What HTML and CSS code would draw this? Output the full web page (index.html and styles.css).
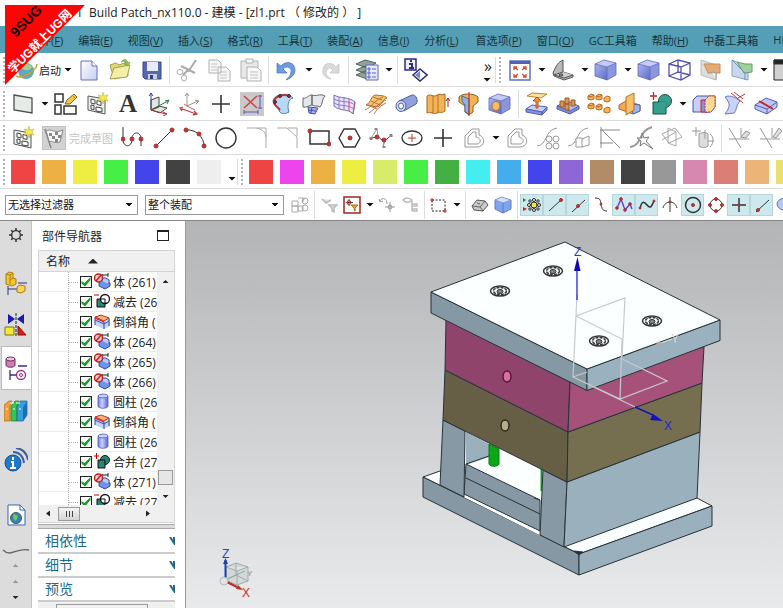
FILE: index.html
```
<!DOCTYPE html>
<html lang="zh-CN">
<head>
  <meta charset="UTF-8">
  <meta name="viewport" content="width=device-width, initial-scale=1.0">
  <title>Build Patch_nx110.0 - 建模</title>
  <link rel="stylesheet" href="styles.css">
</head>
<body>
  <!-- shared icons -->
  <svg class="defs" width="0" height="0" aria-hidden="true">
    <defs>
      <linearGradient id="sky" x1="0" y1="0" x2="0" y2="1"><stop offset="0" stop-color="#b3b4b6"/><stop offset="1" stop-color="#e8eaec"/></linearGradient>
      <linearGradient id="blue" x1="0" y1="0" x2="1" y2="1"><stop offset="0" stop-color="#aab4f0"/><stop offset="1" stop-color="#5f6dc4"/></linearGradient>
      <linearGradient id="pale" x1="0" y1="0" x2="1" y2="1"><stop offset="0" stop-color="#fff"/><stop offset="1" stop-color="#c6cdf2"/></linearGradient>
      <linearGradient id="cylfill" x1="0" y1="0" x2="1" y2="0"><stop offset="0" stop-color="#6a7be8"/><stop offset=".4" stop-color="#ccd4ff"/><stop offset="1" stop-color="#5566d8"/></linearGradient>
    </defs>
    <symbol id="i-sketch" viewBox="0 0 24 24"><path d="M3 4l17 3v15L3 18z" fill="#eef2ec" stroke="#555"/><path d="M6 7l4 1v4l-4-1zM12 8.500l4 1v4l-4-1zM6 13l3 .5v4L6 17zM11 15l6 1v4l-6-1z" fill="#fff" stroke="#444"/><path d="M18 0l1 4 4-1-2 3 2 3-4-1-1 4-1-4-4 1 2-3-2-3 4 1z" fill="#f6e94e" stroke="#b8a52c" stroke-width=".5"/></symbol>
    <symbol id="i-cube" viewBox="0 0 24 24"><g stroke="none"><path d="M1 6l9-4 12 3-9 4z" fill="#c3cbf8"/><path d="M1 6l12 3v13L1 18z" fill="url(#blue)"/><path d="M13 9l9-4v12l-9 5z" fill="#8a96de"/></g><path d="M1 6l9-4 12 3v12l-9 5L1 18zM1 6l12 3 9-4M13 9v13" stroke="#5f69b8" fill="none" stroke-width=".8"/></symbol>
    <symbol id="i-body" viewBox="0 0 17 17"><path d="M5 9l4-2 7 3v3l-5 3-6-3z" fill="#6f92ec" stroke="#2b46b0"/><path d="M8 8V5h4l3 2v4" fill="#bccbfa" stroke="#2b46b0"/><path d="M8 1v4M14 0v4M8 2h6" stroke="#222"/><circle cx="4.500" cy="5" r="4" fill="#f7d0d0" stroke="#c81e1e" stroke-width="1.500"/><path d="M2 8l5-6" stroke="#c81e1e" stroke-width="1.500"/></symbol>
    <symbol id="i-minus" viewBox="0 0 17 17"><path d="M0 2h5" stroke="#c00"/><path d="M3 6h8v8H3z" fill="#2b8577" stroke="#111"/><circle cx="11" cy="6" r="4.500" fill="#fff" stroke="#111" stroke-width="1.300"/><path d="M7 6h4v4" stroke="#111"/></symbol>
    <symbol id="i-chamfer" viewBox="0 0 17 17"><path d="M1 5v7l9 4 6-3V6l-4-3z" fill="#c3d2fa" stroke="none"/><path d="M1 4v8M10 9v7M15 5v8" stroke="#35488f"/><path d="M1 4l6-2 8 3-5 3z" fill="#f6b27a" stroke="#b83a20"/><path d="M1 7l9 4 5-3" stroke="#3c50b0"/><path d="M1 5l9 4" stroke="#d32020" stroke-width="1.300"/></symbol>
    <symbol id="i-cyl" viewBox="0 0 17 17"><path d="M4 3v10c0 3 10 3 10 0V3z" fill="url(#cylfill)" stroke="#4a58c0" stroke-width=".8"/><ellipse cx="9" cy="3" rx="5" ry="2" fill="#c7cffc" stroke="#4a58c0" stroke-width=".8"/></symbol>
    <symbol id="i-unite" viewBox="0 0 17 17"><path d="M0 3h5M2.500 0v6" stroke="#c00"/><circle cx="11" cy="7" r="4.500" fill="#2b8577" stroke="#111"/><path d="M4 7h7v8H4z" fill="#2b8577" stroke="#111"/></symbol>
    <symbol id="i-trim" viewBox="0 0 24 24"><path d="M1 2l12 20M13 2v10M1 13h20" stroke="#999" fill="none"/></symbol>
  </svg>

  <div class="app">
    <header class="titlebar">1&nbsp; Build Patch_nx110.0 - 建模 - [zl1.prt （ 修改的 ） ]</header>

    <nav class="menubar">
      <button>文件(<u>F</u>)</button>
      <button>编辑(<u>E</u>)</button>
      <button>视图(<u>V</u>)</button>
      <button>插入(<u>S</u>)</button>
      <button>格式(<u>R</u>)</button>
      <button>工具(<u>T</u>)</button>
      <button>装配(<u>A</u>)</button>
      <button>信息(<u>I</u>)</button>
      <button>分析(<u>L</u>)</button>
      <button class="wide">首选项(<u>P</u>)</button>
      <button>窗口(<u>O</u>)</button>
      <button>GC工具箱</button>
      <button>帮助(<u>H</u>)</button>
      <button>中磊工具箱</button>
      <button>HB</button>
    </nav>

    <!-- standard toolbar -->
    <div class="toolbar">
      <span class="grip"></span>
      <button class="start">
        <svg viewBox="0 0 24 24" width="24" height="24"><circle cx="11" cy="13" r="8" fill="#5fa9c8"/><path d="M5 8c4-4 9-3 12 1-3 5-8 4-12-1z" fill="#a8d28a"/><path d="M1 18c5 5 22-5 21-12-1 6-14 14-21 12z" fill="#f1c232" stroke="#a98212" stroke-width=".6"/></svg>
        启动<i class="arrow"></i>
      </button>
      <button class="tool" aria-label="新建"><svg viewBox="0 0 24 24"><path d="M4 3h11l5 5v14H4z" fill="url(#pale)" stroke="#6a70b8"/><path d="M15 3v5h5" fill="#fff" stroke="#6a70b8"/></svg></button>
      <button class="tool" aria-label="打开"><svg viewBox="0 0 24 24"><path d="M2 7l6-2 3 2 8-3 1 14-14 3z" fill="#e0d878" stroke="#a5a052"/><path d="M2 21l4-11 16-3-3 12z" fill="#f3efa6" stroke="#a5a052"/><path d="M13 4c3-4 6-3 7 1l2-1-2 4-4-2 2-1c-1-2-3-2-5-1z" fill="#8cc152" stroke="#6c9c3c" stroke-width=".6"/></svg></button>
      <button class="tool" aria-label="保存"><svg viewBox="0 0 24 24"><path d="M4 4h18v17H6l-2-2z" fill="#5769ad" stroke="#3b4a86"/><path d="M8 4h11v9H8z" fill="#e7ecf7" stroke="none"/><path d="M9 16h9v5H9z" fill="#c9cfdc" stroke="none"/><path d="M11 17h3v4h-3z" fill="#333f70" stroke="none"/></svg></button>
      <span class="sep"></span>
      <button class="tool" aria-label="剪切"><svg viewBox="0 0 24 24" stroke="#aaa"><path d="M20 2l-8 12M5 8l14 7M12 12l-5 5" stroke-width="2"/><ellipse cx="4" cy="14" rx="3" ry="2.500"/><ellipse cx="8" cy="20" rx="2.500" ry="3"/></svg></button>
      <button class="tool" aria-label="复制"><svg viewBox="0 0 24 24"><path d="M2 2h9l3 3v10H2zM11 9h8l4 4v10H11z" fill="#f7f7f7" stroke="#b0b0b0"/><path d="M4 6h6M4 9h6M4 12h6M13 14h7M13 17h7M13 20h7" stroke="#c4c4c4"/></svg></button>
      <button class="tool" aria-label="粘贴"><svg viewBox="0 0 24 24"><path d="M3 3h17v17H3z" fill="#e9e9e9" stroke="#b0b0b0"/><path d="M8 1h7v4H8zM9 9h10l4 4v10H9z" fill="#f8f8f8" stroke="#b0b0b0"/><path d="M12 14h8M12 17h8M12 20h8" stroke="#c0c0c0"/></svg></button>
      <span class="sep"></span>
      <button class="tool" aria-label="撤消"><svg viewBox="0 0 24 24"><path d="M2 5v10h10l-4-4c4-4 9-1 8 3 0 3-2 5-5 8 6-2 9-6 9-10 0-8-9-10-14-4z" fill="#6f9be0" stroke="#4272bf" stroke-width=".7"/></svg></button>
      <i class="arrow"></i>
      <button class="tool" aria-label="重做"><svg viewBox="0 0 24 24"><path d="M21 6v9h-9l3-3c-3-4-7-1-7 2 0 3 2 5 5 7-6-1-9-5-8-9 0-7 8-9 13-3z" fill="#dadada" stroke="#c2c2c2" stroke-width=".7"/></svg></button>
      <span class="sep"></span>
      <button class="tool" aria-label="图层"><svg viewBox="0 0 24 24"><path d="M1 17l9-4 11 3-9 5zM1 12l9-4 11 3-9 5zM1 6l9-4 11 3-9 5z" fill="#8fa59a" stroke="#4c6258"/><path d="M11 7h12v15H11z" fill="#e6eafc" stroke="#5a66b8"/><path d="M13 10h2v2h-2zM13 14h2v2h-2zM13 18h2v2h-2zM17 11h4M17 15h4M17 19h4" stroke="#5a66b8"/></svg></button>
      <i class="arrow"></i>
      <span class="sep"></span>
      <button class="tool" aria-label="信息"><svg viewBox="0 0 24 24"><path d="M1 1h11v11H1z" fill="#eef" stroke="#2c2c7c" stroke-width="1.500"/><path d="M6 3h2M5 6h3v4M5 10h5" stroke="#2c2c7c" stroke-width="2"/><path d="M9 17l7-6 7 6-7 6z" fill="#fff" stroke="#2c2c7c" stroke-width="1.500"/><path d="M11 17l5-4v8z" fill="#7d84cc" stroke="none"/></svg></button>
      <div class="more"><span>»</span><i class="arrow"></i></div>
      <span class="grip split"></span>
      <button class="tool" aria-label="适合窗口"><svg viewBox="0 0 24 24"><path d="M2 3h20v19H2z" fill="#fff" stroke="#5f73c0" stroke-width="1.500"/><path d="M2 3h20v3H2z" fill="#4f63b4" stroke="none"/><path d="M6 9l4 3M18 9l-4 3M6 19l4-3M18 19l-4-3M6 12V9h3M18 12V9h-3M6 16v3h3M18 16v3h-3" stroke="#d9482b" stroke-width="1.300"/></svg></button>
      <i class="arrow"></i>
      <button class="tool" aria-label="方位"><svg viewBox="0 0 24 24"><path d="M2 15c3-7 5-11 10-13v12l10 3v2l-9 3-10-4z" fill="#b8b8bc" stroke="#555"/><path d="M12 14l-9 3 10 3 9-3" fill="#d0d0d2" stroke="#555"/><ellipse cx="10" cy="17" rx="2" ry="1" /></svg></button>
      <i class="arrow"></i>
      <button class="tool" aria-label="着色"><svg><use href="#i-cube"/></svg></button>
      <i class="arrow"></i>
      <button class="tool" aria-label="带边着色"><svg><use href="#i-cube"/></svg></button>
      <button class="tool" aria-label="线框"><svg viewBox="0 0 24 24" stroke="#5451a8"><path d="M1 6l9-4 12 3v12l-9 5L1 18zM1 6l12 3 9-4M13 9v13M10 2v12L1 18M10 14l12 3" stroke-width="1.300"/></svg></button>
      <button class="tool" aria-label="剪切截面"><svg viewBox="0 0 24 24"><path d="M2 2l15 5v15L2 17z" fill="#ddd" stroke="#bbb"/><path d="M5 6h16v9H9z" fill="#e2aa75" stroke="#c98c54"/><path d="M13 14l4 1v7" fill="#f3f3f3" stroke="#999"/></svg></button>
      <button class="tool" aria-label="编辑截面"><svg viewBox="0 0 24 24"><path d="M2 2l16 7v13L2 18z" fill="#c7d7ec" stroke="#8ba2c0"/><path d="M7 4l8 2h7v8l-8 1z" fill="#9fd39b" stroke="#699c67"/><path d="M2 2l13 13M15 14v8" stroke="#7793b4"/></svg></button>
      <i class="arrow"></i>
      <button class="tool" aria-label="窗口"><svg viewBox="0 0 24 24"><path d="M1 2h22v20H1z" fill="#d0d0d0" stroke="#222"/><path d="M1 2h22v4H1z" fill="#222"/></svg></button>
    </div>

    <!-- feature toolbar -->
    <div class="toolbar">
      <span class="grip"></span>
      <button class="tool" aria-label="基准平面"><svg viewBox="0 0 24 24"><path d="M3 3l18 3v15L3 18z" fill="#e3ece6" stroke="#4a4f4c" stroke-width="1.300"/></svg></button>
      <i class="arrow"></i>
      <button class="tool" aria-label="草图曲线"><svg viewBox="0 0 24 24"><path d="M1 2h8v8H1zM1 13h6v9H1zM10 14h12v8H10z" fill="#fff" stroke="#333" stroke-width="1.500"/><path d="M11 12l2-4 7-6 3 3-7 7z" fill="#f2c84b" stroke="#8a5f1e"/><path d="M18 3l3 3" stroke="#d66"/></svg></button>
      <button class="tool" aria-label="草图"><svg><use href="#i-sketch"/></svg></button>
      <button class="tool" aria-label="文本"><svg viewBox="0 0 24 24"><text x="12" y="20" class="glyph-a" text-anchor="middle">A</text></svg></button>
      <button class="tool" aria-label="坐标系"><svg viewBox="0 0 24 24"><path d="M4 8l8-3v10l-8 3zM4 18l9 3 7-5-8-2z" fill="#dfe7df" stroke="#444"/><path d="M4 18V1M2 4l2-3 2 3" stroke="#3a3f9c"/><path d="M4 18l17-9M18 9l4-1-2 4" stroke="#2c7a4a"/><path d="M4 18l15 4M16 20l4 2-4 2" stroke="#b23030"/></svg></button>
      <button class="tool" aria-label="WCS"><svg viewBox="0 0 24 24"><path d="M9 2v12M7 4l2-3 2 3" stroke="#999"/><path d="M9 14l11-5M17 8l4 1-3 3" stroke="#8a9a8a"/><path d="M9 14l-3-2M9 14l8 4" stroke="#b66"/><path d="M2 16l16 6M5 15l-3 1 2 3M16 19l3 3-4 1" stroke="#c04040" stroke-width="1.300"/></svg></button>
      <button class="tool" aria-label="点"><svg viewBox="0 0 24 24"><path d="M12 3v18M3 12h18" stroke-width="1.600"/></svg></button>
      <button class="tool" aria-label="测量"><svg viewBox="0 0 24 24"><path d="M0 0h24v24H0z" fill="#c9c9c9" stroke="none"/><path d="M4 4l13 12M17 4L4 16" stroke="#c94343" stroke-width="1.500"/><path d="M4 20h14M20 3v14M4 18v4M18 18v4M18 4h4M18 16h4" stroke="#5a5ab4"/></svg></button>
      <button class="tool" aria-label="曲面"><svg viewBox="0 0 24 24"><path d="M2 8C5 2 16 0 22 6c-5 1-6 9-4 14-7 4-11 0-10-4-3-1-6-3-6-8z" fill="#b7d8f2" stroke="#5383ae"/><path d="M3 9C5 3 14 2 18 4M3 10c0 4 4 5 6 8" stroke="#b33" stroke-width="2"/><circle cx="9" cy="4" r="1.500" fill="#b22"/><circle cx="18" cy="4" r="1.500" fill="#b22"/><circle cx="4" cy="10" r="1.500" fill="#b22"/></svg></button>
      <button class="tool" aria-label="扫掠"><svg viewBox="0 0 24 24"><path d="M1 6c4 1 5-3 9-3v10c-3 0-5 3-9 2zM10 3c4 2 8-2 13 1-3 2-2 8-5 11-4-2-5 0-8-2z" fill="#e4e8ea" stroke="#666"/><path d="M6 15l10 1-3 6-6-1z" fill="#a8b3ee" stroke="#4251b0"/><path d="M6 18l8 1M10 15l-1 6" stroke="#4251b0"/></svg></button>
      <button class="tool" aria-label="网格曲面"><svg viewBox="0 0 24 24"><path d="M1 3c6 4 14 1 21 7l-2 12C15 16 8 20 1 14z" fill="#e6e3fb" stroke="#7a68bd"/><path d="M6 5v12M11 5v13M1 7c7 4 14 1 21 6M1 11c7 4 13 1 20 6" stroke="#8a7ac8"/><path d="M16 7v12M22 10l-2 12" stroke="#d0506c"/></svg></button>
      <button class="tool" aria-label="曲线网格"><svg viewBox="0 0 24 24"><path d="M2 13c6-3 4-9 10-10 5 1 8 0 11 3-5 1-4 7-10 9z" fill="#f6c66e" stroke="#c0621e"/><path d="M1 18c7-3 8-9 18-13M5 21c6-4 8-9 17-13M10 22c4-6 6-8 12-11M7 9l9 4M4 13l9 4M9 5l9 3" stroke="#c0704c"/></svg></button>
      <button class="tool" aria-label="管道"><svg viewBox="0 0 24 24"><path d="M4 9l13-6c4-1 7 6 4 9L9 19z" fill="#90a0dc" stroke="#5060a0"/><ellipse cx="6" cy="14" rx="5" ry="5.500" fill="#d2daf6" stroke="#5060a0"/><ellipse cx="6" cy="14" rx="2.500" ry="3" fill="#fff" stroke="#5060a0"/></svg></button>
      <button class="tool" aria-label="拉伸"><svg viewBox="0 0 24 24"><path d="M1 4c4-3 6 2 10-1 3-2 4 1 8-1v17c-4 3-5 0-8 2-4 2-6-2-10 0z" fill="#f1b459" stroke="#a9651b"/><path d="M7 4v17M12 3v18" stroke="#b87326"/><path d="M22 15V7M20 9l2-3 2 3" stroke="#a22"/></svg></button>
      <button class="tool" aria-label="旋转"><svg viewBox="0 0 24 24"><path d="M2 5c3-4 15-4 19 0v5l-5 4v6l-4 3-4-3v-6L2 10z" fill="#f2b24f" stroke="#8d5a22"/><path d="M12 7v15l-4-2v-7L5 9V4z" fill="#8fb4df" stroke="#4a6f9e"/><path d="M12 0v24" stroke="#c22"/></svg></button>
      <button class="tool" aria-label="孔"><svg viewBox="0 0 24 24"><use href="#i-cube"/><ellipse cx="8" cy="14" rx="4" ry="4.500" fill="#f2bf6b" stroke="#b96a28"/></svg></button>
      <span class="sep"></span>
      <button class="tool" aria-label="偏置"><svg viewBox="0 0 24 24"><path d="M1 17l6-4 15 2-5 5z" fill="#c6cffa" stroke="#5060b0"/><path d="M1 17l16 3v3L1 20zM17 20l5-5v3l-5 5z" fill="#8695e0" stroke="#5060b0"/><path d="M2 4l5-3 15 1-6 4z" fill="#f6e2a0" stroke="#b08a34"/><path d="M11 16V9H8l4-4 4 4h-3v7z" fill="#f1924e" stroke="#b85416"/></svg></button>
      <button class="tool" aria-label="圆柱阵列"><svg viewBox="0 0 24 24"><path d="M1 14l10-5 12 5-9 7z" fill="#b6c1f2" stroke="#5060b0"/><path d="M1 14l13 5 9-5v3l-9 5-13-5z" fill="#7f8edc" stroke="#5060b0"/><path d="M4 9h4v6H4zM9 6h4v6H9zM9 12h4v6H9zM15 8h4v6h-4z" fill="#dd9450" stroke="#9d5a20"/></svg></button>
      <button class="tool" aria-label="阵列特征"><svg viewBox="0 0 24 24" stroke="#b96a20"><path d="M1 4l3-2 3 1v4L4 8 1 7zM9 4l3-2 3 1v4l-3 1-3-1zM17 6l3-2 3 1v4l-3 1-3-1zM1 13l3-2 3 1v4l-3 1-3-1zM9 14l3-2 3 1v4l-3 1-3-1zM17 17l3-2 3 1v4l-3 1-3-1z" fill="#f6b259"/><path d="M1 4l3 1 3-2M9 4l3 1 3-2M1 13l3 1 3-2M9 14l3 1 3-2"/></svg></button>
      <button class="tool" aria-label="修剪体"><svg viewBox="0 0 24 24"><path d="M1 13l7-4 14 4v6l-7 3-14-5z" fill="#f2a95c" stroke="#b06a25"/><path d="M13 12l9 1v6l-7 3z" fill="#9eb4ee" stroke="#5265b0"/><path d="M8 5l8-4v17l-8 5z" fill="#f7bf66" stroke="#b07722"/></svg></button>
      <button class="tool" aria-label="合并"><svg viewBox="0 0 24 24"><path d="M1 4h7M4.500 0v8" stroke="#c22" stroke-width="1.300"/><circle cx="16" cy="9" r="6.500" fill="#36a08e" stroke="#1d4f48"/><path d="M4 10h13v12H4z" fill="#36a08e" stroke="#1d4f48"/><path d="M10 10.500h6.500V15" stroke="#36a08e" stroke-width="2"/></svg></button>
      <i class="arrow"></i>
      <button class="tool" aria-label="抽壳"><svg viewBox="0 0 24 24"><path d="M1 8l4-4h18v11l-4 5H1z" fill="#c8cff6" stroke="#4957a8"/><path d="M9 8h7v12H9z" fill="#8292e0" stroke="#c22"/><path d="M13 8l4-4h6v11l-4 5h-6z" fill="#f9d898" stroke="#b3372a" stroke-dasharray="2 1"/></svg></button>
      <button class="tool" aria-label="修剪片体"><svg viewBox="0 0 24 24"><path d="M2 5c6-3 12 2 15 4-4 4-3 9-6 12l-9 1c5-7 6-10 0-17z" fill="#c9d3f8" stroke="#6976b8"/><path d="M8 1l12 10M11 0l9 7M15 6l7-4" stroke="#c33"/></svg></button>
      <button class="tool" aria-label="拆分体"><svg viewBox="0 0 24 24"><path d="M1 13l11-7 11 4v5l-10 7-12-5z" fill="#bac5f7" stroke="#5361b4"/><path d="M1 13l12 4 10-7M13 17v5" stroke="#5361b4"/><path d="M5 9l14 8" stroke="#c22" stroke-width="2"/></svg></button>
    </div>

    <!-- sketch curves -->
    <div class="toolbar">
      <span class="grip"></span>
      <button class="tool" aria-label="任务环境草图"><svg><use href="#i-sketch"/></svg></button>
      <button class="tool" aria-label="完成草图" disabled><svg viewBox="0 0 24 24"><path d="M0 0h24v24H0z" fill="#d2d2d2" stroke="#b4b4b4"/><path d="M4 5c5-3 9 3 17-1l-3 12c-5 2-8-2-11 0z" fill="#f8f8f8" stroke="#888"/><path d="M3 3l6 19" stroke="#888" stroke-width="1.500"/><path d="M7 7h3v3H7zM13 6h3v3h-3zM10 10h3v3h-3zM16 9h3v3h-3zM13 13h3v3h-3z" fill="#888" stroke="none"/></svg></button>
      <span class="hint">完成草图</span>
      <button class="tool" aria-label="轮廓"><svg viewBox="0 0 24 24"><path d="M2 1v12c0 9 9 9 9 0 0-8 9-8 9 0v7"/><g class="dot"><circle cx="2" cy="13" r="2"/><circle cx="11" cy="13" r="2"/><circle cx="20" cy="13" r="2"/></g></svg></button>
      <button class="tool" aria-label="直线"><svg viewBox="0 0 24 24"><path d="M4 20L20 4"/><g class="dot"><circle cx="4" cy="20" r="2"/><circle cx="20" cy="4" r="2"/></g></svg></button>
      <button class="tool" aria-label="圆弧"><svg viewBox="0 0 24 24"><path d="M3 4c10-1 18 7 18 16"/><g class="dot"><circle cx="3" cy="4" r="2"/><circle cx="16" cy="8" r="2"/><circle cx="21" cy="20" r="2"/></g></svg></button>
      <button class="tool" aria-label="圆"><svg viewBox="0 0 24 24"><circle cx="12" cy="12" r="10" stroke-width="1.400"/></svg></button>
      <button class="tool" aria-label="圆角"><svg viewBox="0 0 24 24" stroke="#aaa"><path d="M2 2h9c8 1 10 6 10 10v10M12 2h9v9" /></svg></button>
      <button class="tool" aria-label="倒斜角"><svg viewBox="0 0 24 24" stroke="#aaa"><path d="M1 2h10l10 9v11M12 2h9v8"/></svg></button>
      <button class="tool" aria-label="矩形"><svg viewBox="0 0 24 24"><path d="M3 5h19v13H3z" stroke-width="1.500"/><g class="dot"><circle cx="3" cy="5" r="2"/><circle cx="22" cy="18" r="2"/></g></svg></button>
      <button class="tool" aria-label="多边形"><svg viewBox="0 0 24 24"><path d="M1 12L6 3h11l5 9-5 9H6z" stroke-width="1.400"/><g class="dot"><circle cx="12" cy="12" r="2"/></g></svg></button>
      <button class="tool" aria-label="艺术样条"><svg viewBox="0 0 24 24"><path d="M2 12c4 0 5-2 7-1s4 4 7 3 4-3 6-5"/><path d="M2 12l6-9 1 8M16 15l-2 6 1-6" stroke="#999"/><g class="dot"><circle cx="8" cy="11" r="2"/><circle cx="15" cy="14" r="2"/></g><path d="M7 2v2M2 11v3M22 8v3M15 20v2" stroke="#888" stroke-width="3"/></svg></button>
      <button class="tool" aria-label="椭圆"><svg viewBox="0 0 24 24"><ellipse cx="12" cy="12" rx="10" ry="7" stroke-width="1.400"/><path d="M12 8v8M8 12h8" stroke="#c33"/></svg></button>
      <button class="tool" aria-label="草图点"><svg viewBox="0 0 24 24"><path d="M12 3v18M3 12h18" stroke-width="1.600"/></svg></button>
      <button class="tool" aria-label="偏置曲线"><svg viewBox="0 0 24 24" stroke="#999"><path d="M3 21V10l7-7h7v6c7 2 6 12-2 12zM6 18v-7l5-5h3v5c6 1 5 7 1 7z"/></svg></button>
      <i class="arrow"></i>
      <button class="tool" aria-label="偏置"><svg viewBox="0 0 24 24" stroke="#999"><path d="M3 21V10l7-7h7v6c7 2 6 12-2 12zM6 18v-7l5-5h3v5c6 1 5 7 1 7z"/></svg></button>
      <button class="tool" aria-label="阵列曲线"><svg viewBox="0 0 24 24" stroke="#999"><path d="M1 20c11-1 7-16 20-18"/><g fill="#fff"><circle cx="13" cy="13" r="3"/><circle cx="20" cy="13" r="3"/><circle cx="13" cy="20" r="3"/><circle cx="20" cy="20" r="3"/></g></svg></button>
      <button class="tool" aria-label="镜像曲线"><svg viewBox="0 0 24 24" stroke="#999"><path d="M1 20c11-1 7-16 20-18"/><path d="M9 12h6v9H9zM15 13l7-3v9l-7 2" fill="#fff"/></svg></button>
      <button class="tool" aria-label="相交曲线"><svg viewBox="0 0 24 24" stroke="#888"><path d="M3 1v21M2 4h20M4 4l18 18M2 17h13"/></svg></button>
      <button class="tool" aria-label="投影曲线"><svg viewBox="0 0 24 24" stroke="#999"><path d="M1 21c13-2 8-16 22-20" stroke-width="2"/><path d="M13 7l2 5 5-1-3 4 7 8-9-6-4 3 1-5-4-3h5z" fill="#fff" stroke="#777"/></svg></button>
      <button class="tool" aria-label="派生曲线"><svg viewBox="0 0 24 24" stroke="#aaa"><path d="M2 8l13-6 7 9-13 6zM8 2l8 4v14l-8-3zM2 14l14-8"/></svg></button>
      <button class="tool" aria-label="投影"><svg viewBox="0 0 24 24"><path d="M8 8c3-2 7-2 9 0v12c-2 2-7 2-9 0z" fill="#ddd" stroke="#999"/><path d="M5 1v9M1 5h9M14 4v9M19 8c4 3 4 9 0 13M17 15h6" stroke="#999"/></svg></button>
      <span class="sep"></span>
      <button class="tool" aria-label="快速修剪"><svg viewBox="0 0 24 24"><use href="#i-trim"/><path d="M13 11l5-6 4 2-4 5z" fill="#ddd" stroke="#999"/></svg></button>
      <button class="tool" aria-label="快速延伸"><svg viewBox="0 0 24 24"><use href="#i-trim"/><path d="M14 11l6-9 3 3-6 7z" fill="#ddd" stroke="#999"/></svg></button>
    </div>

    <!-- colour palettes -->
    <div class="toolbar">
      <span class="grip pal"></span>
      <button class="swatch c-red" aria-label="红"></button>
      <button class="swatch c-orange" aria-label="橙"></button>
      <button class="swatch c-yellow" aria-label="黄"></button>
      <button class="swatch c-green" aria-label="绿"></button>
      <button class="swatch c-blue" aria-label="蓝"></button>
      <button class="swatch c-black" aria-label="黑"></button>
      <button class="swatch c-white" aria-label="白"></button>
      <i class="arrow low"></i>
      <span class="grip pal split"></span>
      <button class="swatch c-red" aria-label="红"></button>
      <button class="swatch c-magenta" aria-label="洋红"></button>
      <button class="swatch c-orange" aria-label="橙"></button>
      <button class="swatch c-yellow" aria-label="黄"></button>
      <button class="swatch c-lime" aria-label="黄绿"></button>
      <button class="swatch c-green" aria-label="绿"></button>
      <button class="swatch c-forest" aria-label="深绿"></button>
      <button class="swatch c-cyan" aria-label="青"></button>
      <button class="swatch c-sky" aria-label="天蓝"></button>
      <button class="swatch c-blue" aria-label="蓝"></button>
      <button class="swatch c-purple" aria-label="紫"></button>
      <button class="swatch c-brown" aria-label="棕"></button>
      <button class="swatch c-black" aria-label="黑"></button>
      <button class="swatch c-gray" aria-label="灰"></button>
      <button class="swatch c-pink" aria-label="粉"></button>
      <button class="swatch c-salmon" aria-label="浅红"></button>
      <button class="swatch c-peach" aria-label="浅橙"></button>
      <button class="swatch c-cream" aria-label="浅黄"></button>
    </div>

    <!-- selection bar -->
    <div class="toolbar select-bar">
      <select class="filter" aria-label="选择过滤器"><option>无选择过滤器</option></select>
      <select class="scope" aria-label="选择范围"><option>整个装配</option></select>
      <button class="snap" aria-label="装配"><svg viewBox="0 0 18 18" stroke="#aaa"><path d="M1 5h6v5H1zM1 10h6v6H1zM7 10h5v5H7zM7 2h5v4M11 6l3-4"/><circle cx="14" cy="5" r="3"/><circle cx="14" cy="12" r="3"/></svg></button>
      <span class="sep"></span>
      <button class="snap" aria-label="重置过滤器"><svg viewBox="0 0 18 18" stroke="#bbb"><path d="M2 3l4 4 5-3M9 9h8l-3 3v4l-2-1v-3z" fill="#ddd" stroke-width="1.500"/></svg></button>
      <button class="snap" aria-label="过滤"><svg viewBox="0 0 18 18"><path d="M1 1h16v16H1z" fill="#fff" stroke="#9c2525" stroke-width="1.500"/><path d="M6 3v7M3 6.500h7" stroke="#533"/><circle cx="6" cy="6.500" r="2" stroke="#a33"/><path d="M8 9h7l-3 3v3l-1-3z" fill="#f3a53a" stroke="#b26a14"/></svg></button>
      <i class="arrow"></i>
      <button class="snap" aria-label="取消选择"><svg viewBox="0 0 18 18" stroke="#999"><path d="M2 5c2-4 7-3 7 3M1 3l1 3 3-1M12 6v10M7 11h10"/><circle cx="12" cy="11" r="2"/></svg></button>
      <button class="snap" aria-label="查找"><svg viewBox="0 0 18 18" stroke="#bbb"><path d="M2 4c3-3 7-2 9 0-3 3-6 3-9 0zM11 5v10M11 8h5v2h-5M11 13h5v2h-5" stroke-width="1.500"/></svg></button>
      <span class="sep"></span>
      <button class="snap" aria-label="矩形选择"><svg viewBox="0 0 18 18"><path d="M2 4h13v11H2z" stroke="#222" stroke-dasharray="2 1.500"/><path d="M1 3h2v2H1zM14 14h2v2h-2z" stroke="#c22"/></svg></button>
      <i class="arrow"></i>
      <span class="sep"></span>
      <button class="snap" aria-label="隐藏面"><svg viewBox="0 0 18 18"><path d="M1 10l5-6 8 1 3 4-5 6-9-1z" fill="#ccc" stroke="#555"/><path d="M1 10l8 1 5-6M9 11l3 4M6 7l3 1" stroke="#666"/></svg></button>
      <button class="snap" aria-label="体"><svg viewBox="0 0 18 18"><path d="M1 4l7-2 9 2v9l-8 4-8-4z" fill="#7fa5ee" stroke="#5e7dc8"/><path d="M1 4l8 3 8-3-9-3z" fill="#d4e0fb" stroke="#889cd0"/><path d="M9 7v10" stroke="#5e7dc8"/></svg></button>
      <span class="sep"></span>
      <button class="snap on" aria-label="捕捉点"><svg viewBox="0 0 18 18"><path d="M0 2l3 2-3 2z" fill="#2b7a3a" stroke="none"/><path d="M0 11l4 2-4 2z" fill="#c22" stroke="none"/><circle cx="11" cy="9" r="3" fill="#f5e743" stroke="#222"/><g fill="#fff" stroke="#222"><circle cx="11" cy="4" r="1.500"/><circle cx="11" cy="14" r="1.500"/><circle cx="6" cy="9" r="1.500"/><circle cx="16" cy="9" r="1.500"/><circle cx="7" cy="5" r="1.200"/><circle cx="15" cy="13" r="1.200"/><circle cx="15" cy="5" r="1.200"/><circle cx="7" cy="13" r="1.200"/></g></svg></button>
      <button class="snap on" aria-label="端点"><svg viewBox="0 0 18 18"><path d="M3 15L15 4"/><g class="dot"><circle cx="15" cy="4" r="1.500"/></g></svg></button>
      <button class="snap on" aria-label="中点"><svg viewBox="0 0 18 18"><path d="M3 16L16 4"/><g class="dot"><circle cx="9" cy="10" r="1.500"/></g></svg></button>
      <button class="snap" aria-label="控制点"><svg viewBox="0 0 18 18"><path d="M3 2c7 0 5 4 6 7s1 6 6 6"/><g class="dot"><circle cx="9" cy="8" r="1"/></g></svg></button>
      <button class="snap on" aria-label="极点"><svg viewBox="0 0 18 18"><path d="M2 12L6 3l4 11 5-6 2 5" stroke="#63c" stroke-width="1.300"/><g class="dot"><circle cx="2" cy="12" r="1.300"/><circle cx="6" cy="3" r="1.300"/><circle cx="10" cy="14" r="1.300"/><circle cx="15" cy="8" r="1.300"/></g></svg></button>
      <button class="snap on" aria-label="定义点"><svg viewBox="0 0 18 18"><path d="M2 13c2-12 6-5 8-3 3 3 4-1 6-5" stroke-width="1.500"/><g class="dot"><circle cx="2" cy="12" r="1"/><circle cx="16" cy="5" r="1"/></g></svg></button>
      <button class="snap" aria-label="交点"><svg viewBox="0 0 18 18"><path d="M9 1v15M2 12c2-8 12-8 14 0"/><g class="dot"><circle cx="9" cy="6" r="1"/></g></svg></button>
      <button class="snap on" aria-label="圆心"><svg viewBox="0 0 18 18"><circle cx="9" cy="9" r="7.500" stroke-width="1.500"/><g class="dot"><circle cx="9" cy="9" r="1.500"/></g></svg></button>
      <button class="snap" aria-label="象限点"><svg viewBox="0 0 18 18"><circle cx="9" cy="9" r="6"/><g class="dot"><circle cx="9" cy="3" r="1.500"/><circle cx="15" cy="9" r="1.500"/><circle cx="9" cy="15" r="1.500"/><circle cx="3" cy="9" r="1.500"/></g></svg></button>
      <button class="snap on" aria-label="现有点"><svg viewBox="0 0 18 18"><path d="M9 2v14M2 9h14" stroke-width="1.500"/><g class="dot"><circle cx="9" cy="9" r="1"/></g></svg></button>
      <button class="snap on" aria-label="曲线上的点"><svg viewBox="0 0 18 18"><path d="M3 16L16 4"/><g class="dot"><circle cx="5" cy="14" r="1.500"/></g></svg></button>
      <button class="snap" aria-label="面上的点"><svg viewBox="0 0 18 18"><path d="M1 8c0-6 12-8 16-4v11c-6 0-15 0-16-7z" fill="#b7c8f2" stroke="#6478b8"/></svg></button>
    </div>

    <main class="work">
      <aside class="rail">
        <button class="rail-btn gear" aria-label="设置"><svg viewBox="0 0 16 16"><circle cx="8" cy="8" r="5" fill="none" stroke="#333" stroke-width="1.600"/><path d="M8 0v3M8 13v3M0 8h3M13 8h3M2.500 2.500l2 2M11.500 11.500l2 2M13.500 2.500l-2 2M4.500 11.500l-2 2" stroke="#333" stroke-width="1.800"/></svg></button>
        <button class="rail-btn" aria-label="装配导航器"><svg viewBox="0 0 24 24"><path d="M4 15v9M4 18h9M14 12h9" stroke="#2b2b90"/><path d="M2 3l3-2 4 1v5l3 1v5l-4 2-6-2z" fill="#f5c431" stroke="#a97b10"/><path d="M2 3l4 1 3-2M6 4v9M6 9l3-2M13 16l3-2 5 1v5l-4 2-4-1z" fill="#f9d755" stroke="#a97b10"/></svg></button>
        <button class="rail-btn" aria-label="约束导航器"><svg viewBox="0 0 24 24"><path d="M4 1l7 5-7 5zM20 1l-7 5 7 5z" fill="#1a1ab4" stroke="none"/><path d="M12 0v23" stroke="#222" stroke-dasharray="3 1"/><path d="M1 14h9v8H1z" fill="#f7e736" stroke="#777720"/><path d="M14 13l8 9h-8z" fill="#d62020" stroke="#871010"/></svg></button>
        <button class="rail-btn active" aria-label="部件导航器"><svg viewBox="0 0 24 24"><path d="M2 3v6c0 3 9 3 9 0V3z" fill="#c883b4" stroke="#7a2262"/><ellipse cx="6.500" cy="3" rx="4.500" ry="2" fill="#ecc6de" stroke="#7a2262"/><path d="M14 10h9M6 14v10M6 19h6" stroke="#3a2b80" stroke-width="1.300"/><circle cx="17" cy="19" r="4.500" fill="#fff" stroke="#a02a80" stroke-width="1.300"/><circle cx="17" cy="19" r="1.500" stroke="#a02a80"/></svg></button>
        <button class="rail-btn" aria-label="重用库"><svg viewBox="0 0 24 24"><path d="M0 6l5-4h3L6 7v15H0z" fill="#f29e38" stroke="#a8661a" stroke-width=".7"/><path d="M7 7l4-5h4l-2 5v15H7z" fill="#38c34a" stroke="#1f7d2c" stroke-width=".7"/><path d="M13 7l3-5h7v14l-4 6h-6z" fill="#339fe0" stroke="#1c5f98" stroke-width=".7"/><path d="M2 10h2M9 10h2M15 10h2M6 4h4M12 4h4" stroke="#fff"/><path d="M19 8v14l4-6V3z" fill="#1f6fb0"/></svg></button>
        <button class="rail-btn web" aria-label="HD3D"><svg viewBox="0 0 24 24"><circle cx="9" cy="15" r="8" fill="#2278c8" stroke="#155292"/><path d="M9 9v3M7 14h2v6M6 20h6" stroke="#fff" stroke-width="2"/><path d="M9 4c6 0 10 4 11 11M12 0c7 1 11 6 12 12" stroke="#3f5f9b" stroke-width="2"/></svg></button>
        <button class="rail-btn web" aria-label="浏览器"><svg viewBox="0 0 24 24"><path d="M4 2h12l5 5v15H4z" fill="#fff" stroke="#3767a7"/><path d="M16 2v5h5" stroke="#3767a7"/><circle cx="12" cy="15" r="5.500" fill="#3184b8" stroke="#555"/><path d="M10 11l4 2-2 5c-2-1-4-4-2-7z" fill="#72cc54" stroke="none"/></svg></button>
        <svg class="wave" viewBox="0 0 28 8"><path d="M1 3c8 8 14-3 26 0" fill="none" stroke="#666" stroke-width="1.300"/></svg>
        <span class="rail-arrow up dim"></span>
        <span class="rail-arrow up dim"></span>
        <span class="rail-arrow"></span>
      </aside>

      <section class="navigator">
        <div class="nav-title"><span>部件导航器</span><button class="dock" aria-label="最大化"></button></div>
        <div class="tree">
          <div class="tree-head">名称<i class="sort"></i></div>
          <div class="tree-body">
            <div class="rows">
              <label class="row"><input type="checkbox" checked><svg><use href="#i-body"/></svg>体 (261)</label>
              <label class="row"><input type="checkbox" checked><svg><use href="#i-minus"/></svg>减去 (26</label>
              <label class="row"><input type="checkbox" checked><svg><use href="#i-chamfer"/></svg>倒斜角 (</label>
              <label class="row"><input type="checkbox" checked><svg><use href="#i-body"/></svg>体 (264)</label>
              <label class="row"><input type="checkbox" checked><svg><use href="#i-body"/></svg>体 (265)</label>
              <label class="row"><input type="checkbox" checked><svg><use href="#i-body"/></svg>体 (266)</label>
              <label class="row"><input type="checkbox" checked><svg><use href="#i-cyl"/></svg>圆柱 (26</label>
              <label class="row"><input type="checkbox" checked><svg><use href="#i-chamfer"/></svg>倒斜角 (</label>
              <label class="row"><input type="checkbox" checked><svg><use href="#i-cyl"/></svg>圆柱 (26</label>
              <label class="row"><input type="checkbox" checked><svg><use href="#i-unite"/></svg>合并 (27</label>
              <label class="row"><input type="checkbox" checked><svg><use href="#i-body"/></svg>体 (271)</label>
              <label class="row"><input type="checkbox" checked><svg><use href="#i-minus"/></svg>减去 (27</label>
            </div>
            <div class="vscroll"><i class="rail-arrow up"></i><span class="vthumb"></span><i class="rail-arrow"></i></div>
          </div>
          <div class="hscroll"><i class="tri left"></i><span class="hthumb"></span><i class="tri right"></i></div>
        </div>
        <div class="splitter"></div>
        <button class="panel">相依性<svg viewBox="0 0 6 8"><path d="M1 0l4 6V0"/></svg></button>
        <button class="panel">细节<svg viewBox="0 0 6 8"><path d="M1 0l4 6V0"/></svg></button>
        <button class="panel">预览<svg viewBox="0 0 6 8"><path d="M1 0l4 6V0"/></svg></button>
        <div class="hscroll bottom"><i class="tri left"></i><span class="hthumb"></span><i class="tri right"></i></div>
      </section>

      <section class="viewport">
        <svg viewBox="186 221 597 387" preserveAspectRatio="xMidYMid slice" role="img" aria-label="模架">
          <rect x="186" y="221" width="597" height="387" fill="url(#sky)"/>
          <g stroke="#263238" stroke-width="1" stroke-linejoin="round">
            <!-- base plate -->
            <path d="M423 477l17-6 257 27 15 8-133 48z" fill="#fbfefe"/>
            <path d="M423 477l156 77v21L423 497z" fill="#8598a3"/>
            <path d="M579 554l133-48v20l-133 49z" fill="#9ab0bd"/>
            <!-- ejector space -->
            <path d="M465 431l78 39-3 65-76-38z" fill="#fbffff" stroke="none"/>
            <path d="M466 432l23 12v13l-23 8z" fill="#9ab0bd" stroke="none"/>
            <path d="M466 464l23-8" fill="none"/>
            <path d="M489 444l10 5v15c-1 3-9 3-10 0z" fill="#08a817" stroke="#087812"/>
            <path d="M540.500 469h2v22h-2z" fill="#08a817" stroke="none"/>
            <path d="M466 464l74 36v31l-76-37z" fill="#8598a3"/>
            <path d="M466 478l74 36M534 498l6 2" fill="none"/>
            <path d="M464 495l76 37v3l-76-38z" fill="#fff" stroke="none"/>
            <!-- spacer blocks -->
            <path d="M443 420l22 11-1 66-24-12z" fill="#8799a4"/>
            <path d="M543 470l24 12-3 65-24-12z" fill="#8799a4"/>
            <path d="M567 482l133-50-3 66-133 49z" fill="#9ab0bd"/>
            <!-- cavity plates -->
            <path d="M445 370l123 62-1 50-124-62z" fill="#665f46"/>
            <path d="M568 432l134-49-2 49-133 50z" fill="#756e4f"/>
            <path d="M446 319l124 63-2 50-123-62z" fill="#8f446b"/>
            <path d="M570 382l134-35-2 36-134 49z" fill="#a5517a"/>
            <!-- top clamp plate -->
            <path d="M431 292l156 77v21.500L431 313z" fill="#8599a4"/>
            <path d="M587 369l133-49v20.500l-133 50z" fill="#9ab1bf"/>
            <path d="M431 292l134-50 155 78-133 49z" fill="#fbffff"/>
            <path d="M574 551l9 1-4 3z" fill="#263238"/>
          </g>
          <g fill="none" stroke="#333">
            <g id="bolt"><ellipse cx="500" cy="291" rx="9.500" ry="5" stroke-width="1.500"/><ellipse cx="500" cy="291" rx="6.500" ry="3.500" stroke-width="1.500" stroke-dasharray="3 1"/><ellipse cx="500" cy="291.500" rx="3" ry="2" fill="#888"/></g>
            <use href="#bolt" x="53" y="-20"/>
            <use href="#bolt" x="152" y="30"/>
            <use href="#bolt" x="99" y="50"/>
          </g>
          <ellipse cx="507" cy="376.500" rx="4" ry="5.500" fill="#d9709b" stroke="#501b38" stroke-width="1.500"/>
          <ellipse cx="505" cy="425.500" rx="4" ry="5.500" fill="#b8ad86" stroke="#2e2a1b" stroke-width="1.500"/>
          <!-- datum csys -->
          <g fill="none" stroke="#c9c9cc" stroke-width="1.200">
            <path d="M576 316l49-18-3 59M576 316l46 23-2 60M573 377l47 22 47-18-47-23M573 377l14-5M573 377l3-61 1-21M573 377l62 30"/>
            <path d="M658 344l14-5" stroke="#ddd"/>
          </g>
          <circle cx="659" cy="344" r="2.500" fill="#aaa"/>
          <path d="M577 300v-36" stroke="#1616b8" stroke-width="1.200"/>
          <path d="M577.500 257l3 14h-6.500z" fill="#0c0cb0"/>
          <path d="M635 407l18 8" stroke="#1616b8" stroke-width="1.500"/>
          <path d="M663 421l-13-1 3-6z" fill="#1010c8"/>
          <g class="axis">
            <text x="574" y="256" fill="#3434e0">Z</text>
            <text x="664" y="430" fill="#2222dc">X</text>
            <text x="671" y="343" fill="#d8d8dc">Y</text>
            <text x="222" y="558" fill="#2546c4">Z</text>
            <text x="242" y="597" fill="#c93030">X</text>
            <text x="247" y="576" class="small" fill="#788878">Y</text>
          </g>
          <!-- view triad -->
          <path d="M226 567l10-4 12 4v14l-11 4-11-5zM226 567l11 4 11-4M237 571v14M236 563v12l-10 5M236 575l12 6" fill="#cdd2d2" fill-opacity=".7" stroke="#a4acac"/>
          <path d="M227 579l18-8" stroke="#82b49a"/>
          <path d="M225.500 578v-18" stroke="#1f3fae" stroke-width="2"/><path d="M225.500 558l2.500 6h-5z" fill="#1f3fae"/>
          <path d="M227 582l10 5" stroke="#b92a2a" stroke-width="2"/><path d="M243 590l-7-1 2-4z" fill="#b92a2a"/>
          <circle cx="224" cy="581" r="4" fill="#e3e3e3" stroke="#999" stroke-width=".6"/>
        </svg>
      </section>
    </main>

    <div class="ribbon">
      <svg viewBox="0 0 80 80">
        <path d="M0 0h80L0 80z" fill="#fb0505"/>
        <text transform="translate(11 33) rotate(-45)" class="brand">9SUG</text>
        <text transform="translate(8 69) rotate(-45)" class="slogan">学UG就上UG网</text>
      </svg>
    </div>
  </div>
</body>
</html>
```
FILE: styles.css
```
* {
  box-sizing: border-box;
}

body {
  margin: 0;
  font-family: "Open Sans", "Noto Sans CJK SC", sans-serif;
  font-size: 12px;
  color: #222;
  background: #fff;
}

button {
  padding: 0;
  border: none;
  background: none;
  font: inherit;
  color: inherit;
  flex: none;
}

.defs {
  position: absolute;
}

.app {
  position: relative;
  display: flex;
  flex-direction: column;
  height: 100vh;
  overflow: hidden;
}

.titlebar {
  height: 26px;
  line-height: 26px;
  padding-left: 76px;
  font-size: 12px;
  white-space: pre;
  text-spacing-trim: space-all;
}

.menubar {
  display: flex;
  gap: 15px;
  height: 27px;
  padding-left: 29px;
  background: #559fb6;
  color: #12323c;
  font-size: 11px;
  overflow: hidden;
  white-space: nowrap;
}

.menubar .wide {
  margin-left: 2px;
}

/* toolbars */
.toolbar {
  display: flex;
  align-items: center;
  flex: none;
  height: 34px;
  border-bottom: 1px solid #dcdcdc;
  overflow: hidden;
  white-space: nowrap;
}

.grip {
  flex: none;
  width: 7px;
  height: 26px;
  background: repeating-linear-gradient(#b4b4b4 0 2px, #fff 2px 4px) 3px 0 / 2px 100% no-repeat;
}

.grip.pal {
  width: 8px;
}

.grip.split {
  border-left: 1px solid #ddd;
  width: 9px;
}

.tool {
  display: flex;
  align-items: center;
  justify-content: center;
  width: 31px;
  height: 30px;
}

.tool svg {
  width: 24px;
  height: 24px;
}

.tool svg,
.snap svg,
.rail-btn svg {
  fill: none;
}

.tool svg:not([stroke]),
.snap svg:not([stroke]) {
  stroke: #333;
}

.dot {
  fill: #c23434;
  stroke: #a83030;
  stroke-width: 1;
}

.glyph-a {
  font-family: "Liberation Serif", serif;
  font-weight: bold;
  font-size: 25px;
  fill: #333;
  stroke: none;
}

.start {
  display: flex;
  align-items: center;
  width: 66px;
  padding-left: 8px;
  font-size: 11px;
}

.arrow {
  flex: none;
  width: 12px;
  height: 4px;
  background: #111;
  clip-path: polygon(3px 0, 11px 0, 7px 4px);
}

.arrow.low {
  margin-top: 14px;
}

.sep {
  flex: none;
  width: 6px;
  height: 28px;
  background: linear-gradient(#ddd, #ddd) 3px 0 / 1px 100% no-repeat;
}

.more {
  display: flex;
  flex-direction: column;
  align-items: flex-end;
  flex: none;
  width: 61px;
  margin-right: 3px;
  font-size: 16px;
  line-height: 16px;
}

.more .arrow {
  margin-top: 4px;
}

.hint {
  flex: none;
  width: 48px;
  font-size: 11px;
  color: #c4c4c4;
}

.swatch {
  width: 24px;
  height: 24px;
  margin: 0 4px 0 3px;
}

.c-red { background: #ee4444; }
.c-orange { background: #ecb044; }
.c-yellow { background: #eeee42; }
.c-green { background: #46ee46; }
.c-blue { background: #4444ec; }
.c-black { background: #424242; }
.c-white { background: #eeeeee; }
.c-magenta { background: #ee44ee; }
.c-lime { background: #d8ec6a; }
.c-forest { background: #44b044; }
.c-cyan { background: #44eeee; }
.c-sky { background: #44aeec; }
.c-purple { background: #8e66d6; }
.c-brown { background: #b28c66; }
.c-gray { background: #989898; }
.c-pink { background: #d688b0; }
.c-salmon { background: #da7e76; }
.c-peach { background: #ecb476; }
.c-cream { background: #ecdf72; }

/* selection bar */
.select-bar {
  height: 32px;
  padding-left: 5px;
  border-bottom: 1px solid #888;
}

.select-bar select {
  flex: none;
  appearance: none;
  height: 20px;
  padding: 0 2px;
  border: 1px solid #999;
  border-radius: 0;
  font-family: inherit;
  font-size: 11px;
  color: #111;
  background:
    linear-gradient(to bottom right, #111 50%, transparent 50%) right 4px center / 4px 4px no-repeat,
    linear-gradient(to bottom left, #111 50%, transparent 50%) right 8px center / 4px 4px no-repeat,
    #fff;
}

.filter {
  width: 133px;
  margin-right: 7px;
}

.scope {
  width: 139px;
  margin-right: 4px;
}

.snap {
  display: flex;
  align-items: center;
  justify-content: center;
  width: 23px;
  height: 22px;
}

.snap svg {
  flex: none;
  width: 18px;
  height: 18px;
}

.snap.on {
  background: #cde9ed;
  border: 1px solid #b4d6dc;
}

/* work area */
.work {
  display: flex;
  flex: 1;
  min-height: 0;
}

.rail {
  display: flex;
  flex-direction: column;
  align-items: center;
  flex: none;
  width: 32px;
  background: #dcdcdc;
  border-right: 1px solid #c4c4c4;
  overflow: hidden;
}

.rail-btn {
  display: flex;
  align-items: center;
  justify-content: center;
  width: 30px;
  height: 42px;
}

.rail-btn svg {
  width: 24px;
  height: 24px;
}

.rail-btn.gear {
  height: 28px;
  margin-bottom: 13px;
}

.rail-btn.gear svg {
  width: 14px;
  height: 14px;
}

.rail-btn.active {
  height: 44px;
  background: #fff;
  border: 1px solid #bbb;
  border-right: none;
}

.rail-btn.web {
  height: 54px;
  margin-top: 1px;
}

.wave {
  flex: none;
  width: 28px;
  height: 8px;
  margin-top: 5px;
  margin-bottom: 9px;
}

.rail-arrow {
  flex: none;
  width: 6px;
  height: 3px;
  margin-bottom: 13px;
  background: #222;
  clip-path: polygon(0 0, 100% 0, 50% 100%);
}

.rail-arrow.up {
  clip-path: polygon(50% 0, 100% 100%, 0 100%);
}

.rail-arrow.dim {
  background: #999;
}

.navigator {
  display: flex;
  flex-direction: column;
  flex: none;
  width: 154px;
  padding: 0 10px 0 6px;
  background: #fff;
  border-right: 1px solid #999;
  overflow: hidden;
}

.nav-title {
  display: flex;
  align-items: center;
  justify-content: space-between;
  height: 29px;
  flex: none;
  padding: 0 6px 0 4px;
}

.dock {
  width: 12px;
  height: 11px;
  border: 1px solid #222;
  border-top-width: 2px;
}

.tree {
  flex: none;
  border: 1px solid #d4d4d4;
}

.tree-head {
  display: flex;
  align-items: center;
  gap: 18px;
  height: 21px;
  padding-left: 7px;
  background: #f0f0f0;
  border-bottom: 1px solid #d4d4d4;
}

.sort {
  width: 10px;
  height: 5px;
  background: #222;
  clip-path: polygon(50% 0, 100% 100%, 0 100%);
}

.tree-body {
  display: flex;
  height: 233px;
}

.rows {
  flex: 1;
  min-width: 0;
  overflow: hidden;
  background: repeating-linear-gradient(#aaa 0 1px, #fff 1px 2px) 29px 0 / 1px 100% no-repeat;
}

.row {
  display: flex;
  align-items: center;
  height: 20px;
  padding-left: 41px;
  border-bottom: 1px solid #ececec;
  background: repeating-linear-gradient(to right, #aaa 0 1px, transparent 1px 2px) 30px 10px / 10px 1px no-repeat;
  white-space: nowrap;
}

.row input {
  appearance: none;
  flex: none;
  width: 12px;
  height: 12px;
  margin: 0 2px 0 0;
  border: 1px solid #222;
  background: #fff;
}

.row input:checked::after {
  content: "";
  display: block;
  width: 10px;
  height: 10px;
  background: #12a022;
  clip-path: polygon(5% 45%, 35% 65%, 95% 5%, 95% 35%, 40% 100%, 5% 70%);
}

.row svg {
  flex: none;
  width: 17px;
  height: 17px;
  margin-right: 2px;
  fill: none;
}

.vscroll {
  display: flex;
  flex-direction: column;
  align-items: center;
  flex: none;
  width: 17px;
  padding-top: 8px;
  background: #f0f0f0;
}

.vscroll .rail-arrow {
  margin-bottom: 7px;
}

.vthumb {
  width: 15px;
  height: 15px;
  margin-top: auto;
  margin-bottom: 10px;
  background: #e6e6e6;
  border: 1px solid #999;
}

.hscroll {
  display: flex;
  align-items: center;
  height: 17px;
  padding: 0 24px 0 7px;
  background: #f0f0f0;
}

.tri {
  width: 4px;
  height: 6px;
  background: #222;
}

.tri.left {
  clip-path: polygon(0 50%, 100% 0, 100% 100%);
}

.tri.right {
  clip-path: polygon(100% 50%, 0 0, 0 100%);
  margin-left: auto;
}

.hthumb {
  width: 22px;
  height: 14px;
  margin-left: 8px;
  background:
    repeating-linear-gradient(to right, #444 0 1px, transparent 1px 3px) center / 7px 6px no-repeat,
    linear-gradient(#f4f4f4, #d4d4d4);
  border: 1px solid #999;
}

.splitter {
  flex: none;
  height: 5px;
  margin-top: 1px;
  margin-bottom: 1px;
  background: #dadada;
  border-top: 1px solid #aaa;
  border-bottom: 1px solid #aaa;
}

.panel {
  display: flex;
  align-items: center;
  justify-content: space-between;
  height: 24px;
  padding-left: 7px;
  border-bottom: 2px solid #ccc;
  color: #1c6a86;
  font-size: 14px;
  line-height: 22px;
}

.panel svg {
  width: 6px;
  height: 8px;
  fill: none;
  stroke: #1c6a86;
  stroke-width: 2;
}

.hscroll.bottom {
  flex: none;
  padding: 0 7px;
}

.bottom .hthumb {
  flex: 1;
  margin: 0 16px 0 7px;
}

.viewport {
  flex: 1;
  min-width: 0;
}

.viewport svg {
  display: block;
  width: 100%;
  height: 100%;
}

.axis {
  font-family: "Liberation Sans", sans-serif;
  font-size: 12px;
}

.axis .small {
  font-size: 8px;
}

/* corner ribbon lies over the title and toolbars */
.ribbon {
  position: absolute;
  top: 5px;
  left: 5px;
  width: 80px;
}

.ribbon svg {
  display: block;
  width: 80px;
  height: 80px;
}

.brand {
  font-family: "Liberation Sans", sans-serif;
  font-weight: bold;
  font-size: 14px;
  fill: #1a0000;
}

.slogan {
  font-family: "Liberation Sans", "Noto Sans CJK SC", sans-serif;
  font-weight: bold;
  font-size: 12px;
  fill: #fff;
}
```
